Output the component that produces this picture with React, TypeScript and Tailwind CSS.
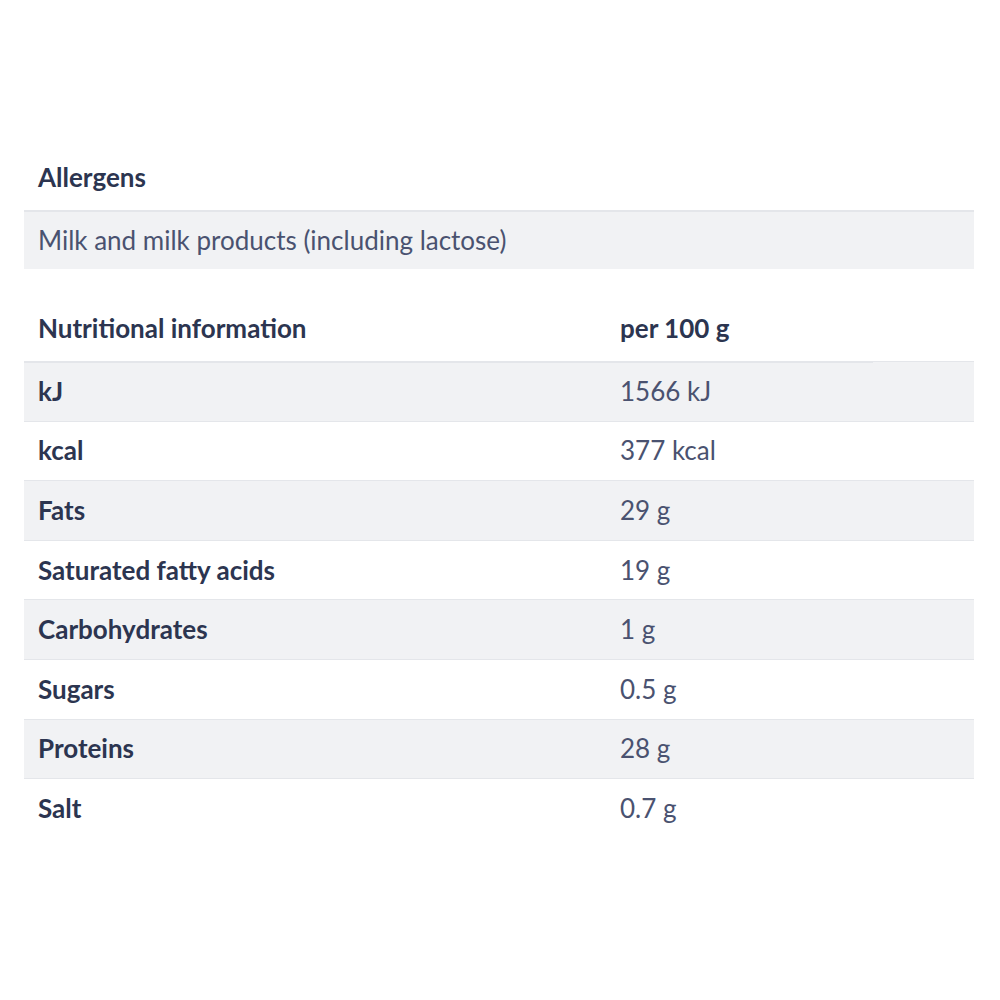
const rows = [
  { label: "kJ", value: "1566 kJ" },
  { label: "kcal", value: "377 kcal" },
  { label: "Fats", value: "29 g" },
  { label: "Saturated fatty acids", value: "19 g" },
  { label: "Carbohydrates", value: "1 g" },
  { label: "Sugars", value: "0.5 g" },
  { label: "Proteins", value: "28 g" },
  { label: "Salt", value: "0.7 g" },
];

export default function App() {
  return (
    <div className="min-h-screen bg-white pl-6 pt-[146px] font-['Lato','Noto_Sans',sans-serif] text-[26px]">
      <div className="w-[950px]">
        <section>
          <h2 className="flex h-[64px] items-center px-[14px] pb-[2px] font-bold text-[#2c3550]">Allergens</h2>
          <div className="flex h-[59px] items-center border-t-2 border-[#e4e6ea] bg-[#f1f2f4] px-[14px] text-[#4a5270]">
            Milk and milk products (including lactose)
          </div>
        </section>

        <section className="mt-[27px]">
          <div className="grid h-[65px] grid-cols-[582px_1fr] items-center px-[14px] font-bold text-[#2c3550]">
            <div>Nutritional information</div>
            <div>per 100 g</div>
          </div>
          <div className="relative">
            <div className="absolute left-0 top-0 h-[2px] w-[849px] bg-[#e4e6ea]" />
          </div>
          {rows.map((row, i) => (
            <div
              key={row.label}
              className={`grid h-[59.6px] grid-cols-[582px_1fr] items-center border-t border-[#e4e6ea] px-[14px] ${
                i % 2 === 0 ? "bg-[#f1f2f4]" : "bg-white"
              }`}
            >
              <div className="font-bold text-[#2c3550]">{row.label}</div>
              <div className="text-[#4a5270]">{row.value}</div>
            </div>
          ))}
        </section>
      </div>
    </div>
  );
}
